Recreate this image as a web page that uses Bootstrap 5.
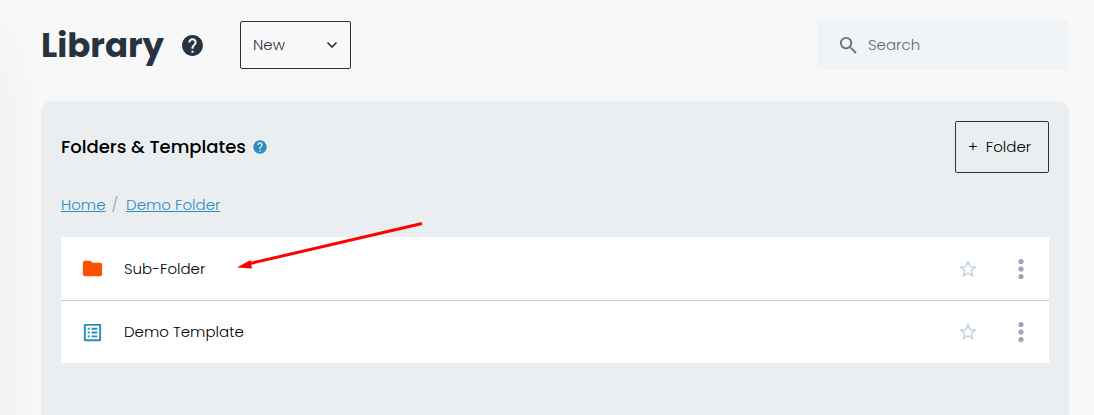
<!DOCTYPE html>
<html lang="en">
<head>
<meta charset="utf-8">
<meta name="viewport" content="width=device-width, initial-scale=1">
<title>Library</title>
<link href="https://cdn.jsdelivr.net/npm/bootstrap@5.3.0/dist/css/bootstrap.min.css" rel="stylesheet">
<style>
  :root { --ink: #27333f; --link: #2b8cbe; --panel: #eaeef1; }
  body {
    font-family: Poppins, Inter, "Open Sans", sans-serif;
    font-size: 15px; line-height: 24px; font-weight: 300; color: #000;
    background:
      linear-gradient(to bottom, #f8f8f8, #f8f8f800 120px),
      linear-gradient(to right, #f0f1f1, #f8f8f8 40px);
  }
  .page { min-height: 100vh; padding: 20px 25px 0 41px; }
  .page-head { margin-bottom: 31px; }
  .page-title { font-size: 34px; line-height: 50px; font-weight: 700; color: var(--ink); }
  .icon-btn { border: 0; background: none; padding: 0; display: flex; }
  .new-select {
    width: 111px; height: 48px; padding: 0 12px; margin-left: 35px; font-size: 15px; font-weight: 300;
    color: var(--ink); border: 1px solid var(--ink); border-radius: 2px; background-color: transparent;
    background-image: url("data:image/svg+xml,%3Csvg xmlns='http://www.w3.org/2000/svg' viewBox='0 0 12 12'%3E%3Cpath d='M1.5 3.5L6 8l4.500-4.500' fill='none' stroke='%2327333f' stroke-width='1.600'/%3E%3C/svg%3E");
    background-size: 12px 12px; background-position: right 12px center;
  }
  .search-box { width: 251px; height: 50px; padding: 0 20px; margin-right: 1px; background: #f0f4f7; color: #6b747c; }
  .search-box input { font-size: 15px; font-weight: 300; color: inherit; outline: 0; min-width: 0; }
  .search-box input::placeholder { color: #5f6870; opacity: 1; }
  .panel { background: var(--panel); border-radius: 10px 10px 0 0; padding: 20px; }
  .panel-title { font-size: 18px; line-height: 24px; font-weight: 500; }
  .panel-help { margin-left: 6px; }
  .folder-btn {
    height: 52px; width: 94px; padding: 0 12px; font-size: 15px; font-weight: 300;
    color: #000; border: 1px solid var(--ink); border-radius: 2px;
  }
  .crumbs { font-size: 15px; --bs-breadcrumb-item-padding-x: 8px; --bs-breadcrumb-divider-color: #959da6; }
  .crumbs a { color: var(--link); }
  .crumbs .breadcrumb-item + .breadcrumb-item { padding-left: 6px; }
  .entries { --bs-list-group-border-radius: 0; }
  .entries .list-group-item { height: 62px; padding: 0 20px; border: 0; color: #000; }
  .entries .list-group-item:first-child { height: 64px; border-bottom: 1px solid #c5cfdb; }
  .star { color: #c5d1de; margin-right: 26px; }
  .dots { color: #9ba7b3; }
  .pointer-arrow { left: 175px; top: -16px; pointer-events: none; z-index: 2; }
</style>
</head>
<body>
<div class="page d-flex flex-column">
  <header class="page-head d-flex align-items-center">
    <h1 class="page-title mb-0">Library</h1>
    <button class="icon-btn ms-3" type="button" aria-label="Library help">
      <svg width="25" height="25" viewBox="0 0 24 24" fill="#27333f"><path d="M12 2C6.480 2 2 6.480 2 12s4.480 10 10 10 10-4.480 10-10S17.520 2 12 2zm1 17h-2v-2h2v2zm2.070-7.750-.9.920C13.450 12.900 13 13.500 13 15h-2v-.5c0-1.100.45-2.100 1.170-2.830l1.240-1.260c.37-.36.59-.86.59-1.410 0-1.100-.9-2-2-2s-2 .9-2 2H8c0-2.210 1.790-4 4-4s4 1.790 4 4c0 .88-.36 1.680-.93 2.250z"/></svg>
    </button>
    <select class="form-select new-select me-auto" aria-label="New"><option>New</option></select>
    <label class="search-box d-flex align-items-center gap-2">
      <svg class="flex-shrink-0" width="23" height="23" viewBox="0 0 24 24" fill="currentColor"><path d="M15.500 14h-.79l-.28-.27A6.470 6.470 0 0 0 16 9.500 6.500 6.500 0 1 0 9.500 16c1.610 0 3.090-.59 4.230-1.570l.27.28v.79l5 4.990L20.490 19l-4.990-5zm-6 0C7.010 14 5 11.990 5 9.500S7.010 5 9.500 5 14 7.010 14 9.500 11.990 14 9.500 14z"/></svg>
      <input class="border-0 bg-transparent p-0 flex-grow-1" type="search" placeholder="Search" aria-label="Search">
    </label>
  </header>

  <main class="panel flex-grow-1">
    <div class="d-flex align-items-center mb-3">
      <h2 class="panel-title mb-0">Folders &amp; Templates</h2>
      <button class="icon-btn panel-help" type="button" aria-label="Folders and templates help">
        <svg width="16" height="16" viewBox="0 0 24 24" fill="#2b8cbe"><path d="M12 2C6.480 2 2 6.480 2 12s4.480 10 10 10 10-4.480 10-10S17.520 2 12 2zm1 17h-2v-2h2v2zm2.070-7.750-.9.920C13.450 12.900 13 13.500 13 15h-2v-.5c0-1.100.45-2.100 1.170-2.830l1.240-1.260c.37-.36.59-.86.59-1.410 0-1.100-.9-2-2-2s-2 .9-2 2H8c0-2.210 1.790-4 4-4s4 1.790 4 4c0 .88-.36 1.680-.93 2.250z"/></svg>
      </button>
      <button class="btn folder-btn ms-auto d-flex align-items-center gap-2" type="button"><span>+</span><span>Folder</span></button>
    </div>

    <nav class="py-1 mb-3" aria-label="Breadcrumb">
      <ol class="breadcrumb crumbs mb-0">
        <li class="breadcrumb-item"><a href="#">Home</a></li>
        <li class="breadcrumb-item"><a href="#">Demo Folder</a></li>
      </ol>
    </nav>

    <div class="position-relative">
      <ul class="list-group entries">
        <li class="list-group-item d-flex align-items-center">
          <svg width="23" height="23" viewBox="0 0 24 24" fill="#ff4f00"><path d="M10 4H4c-1.100 0-1.990.9-1.990 2L2 18c0 1.100.9 2 2 2h16c1.100 0 2-.9 2-2V8c0-1.100-.9-2-2-2h-8l-2-2z"/></svg>
          <span class="entry-name ms-3 ps-1 me-auto">Sub-Folder</span>
          <button class="icon-btn star" type="button" aria-label="Favorite Sub-Folder"><svg width="22" height="22" viewBox="0 0 24 24" fill="currentColor"><path d="M22 9.240l-7.190-.62L12 2 9.190 8.630 2 9.240l5.460 4.730L5.820 21 12 17.270 18.180 21l-1.630-7.030L22 9.240zM12 15.400l-3.760 2.270 1-4.280-3.320-2.880 4.380-.38L12 6.100l1.710 4.040 4.380.38-3.320 2.880 1 4.280L12 15.400z"/></svg></button>
          <button class="icon-btn dots ms-2" type="button" aria-label="Sub-Folder actions"><svg width="16" height="24" viewBox="0 0 16 24" fill="currentColor"><circle cx="8" cy="4.500" r="2.600"/><circle cx="8" cy="12" r="2.600"/><circle cx="8" cy="19.500" r="2.600"/></svg></button>
        </li>
        <li class="list-group-item d-flex align-items-center">
          <svg width="23" height="23" viewBox="0 0 24 24" fill="#2b8cbe"><path d="M19 5v14H5V5h14m1.100-2H3.900c-.5 0-.9.4-.9.900v16.200c0 .4.400.900.900.900h16.200c.4 0 .9-.5.900-.9V3.900c0-.5-.5-.9-.9-.9zM11 7h6v2h-6V7zm0 4h6v2h-6v-2zm0 4h6v2h-6zM7 7h2v2H7zm0 4h2v2H7zm0 4h2v2H7z"/></svg>
          <span class="entry-name ms-3 ps-1 me-auto">Demo Template</span>
          <button class="icon-btn star" type="button" aria-label="Favorite Demo Template"><svg width="22" height="22" viewBox="0 0 24 24" fill="currentColor"><path d="M22 9.240l-7.190-.62L12 2 9.190 8.630 2 9.240l5.460 4.730L5.820 21 12 17.270 18.180 21l-1.630-7.030L22 9.240zM12 15.400l-3.760 2.270 1-4.280-3.320-2.880 4.380-.38L12 6.100l1.710 4.040 4.380.38-3.320 2.880 1 4.280L12 15.400z"/></svg></button>
          <button class="icon-btn dots ms-2" type="button" aria-label="Demo Template actions"><svg width="16" height="24" viewBox="0 0 16 24" fill="currentColor"><circle cx="8" cy="4.500" r="2.600"/><circle cx="8" cy="12" r="2.600"/><circle cx="8" cy="19.500" r="2.600"/></svg></button>
        </li>
      </ul>
      <svg class="pointer-arrow position-absolute" width="190" height="50" viewBox="0 0 190 50" aria-hidden="true"><path d="M186 2.500L14 42.500" stroke="#f00" stroke-width="3"/><path d="M1 46.500L14.500 39l1.500 8.500z" fill="#f00"/></svg>
    </div>
  </main>
</div>
<script src="https://cdn.jsdelivr.net/npm/bootstrap@5.3.0/dist/js/bootstrap.bundle.min.js"></script>
</body>
</html>
